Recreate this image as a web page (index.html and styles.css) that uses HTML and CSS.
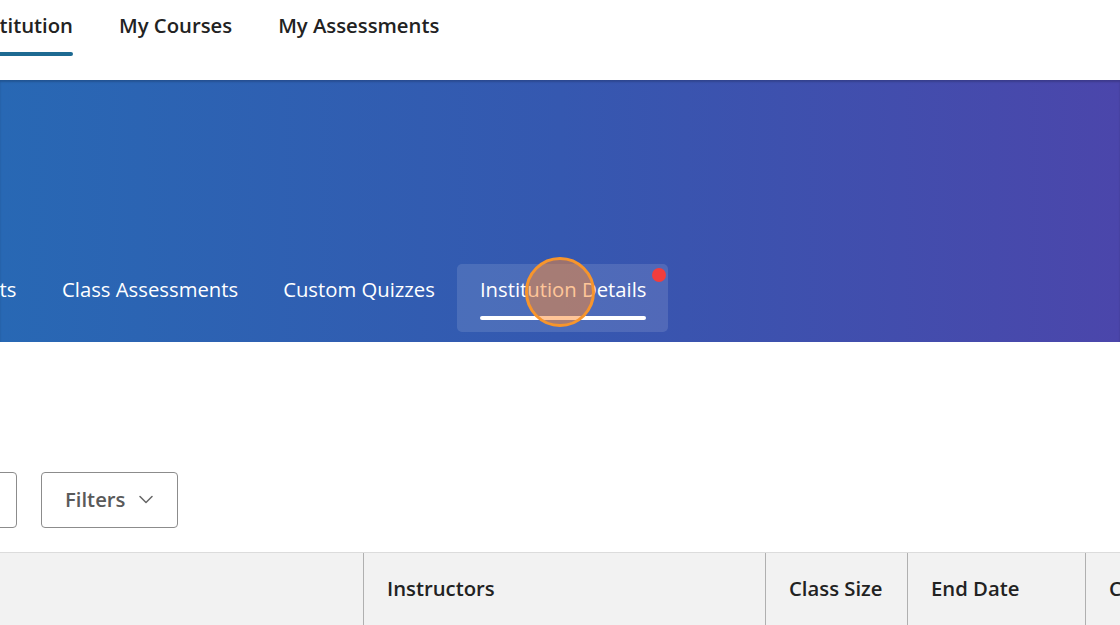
FILE: index.html
```html
<!DOCTYPE html>
<html>
<head>
<meta charset="utf-8">
<link rel="stylesheet" href="styles.css">
</head>
<body>
<header class="topnav">
  <div class="nav-item nav-first active"><span class="nav-label">Institution</span><span class="nav-bar"></span></div>
  <div class="nav-item"><span class="nav-label">My Courses</span></div>
  <div class="nav-item"><span class="nav-label">My Assessments</span></div>
</header>
<section class="banner">
  <nav class="tabs">
    <div class="tab tab-first"><span class="tab-label">Student Assessments</span></div>
    <div class="tab"><span class="tab-label">Class Assessments</span></div>
    <div class="tab"><span class="tab-label">Custom Quizzes</span></div>
    <div class="tab tab-active"><span class="tab-label">Institution Details</span><span class="tab-bar"></span><span class="dot"></span><span class="cursor"></span></div>
  </nav>
</section>
<section class="toolbar">
  <div class="search"></div>
  <button class="filters">Filters<svg class="chev" width="14" height="9" viewBox="0 0 14 9"><path d="M1 1.5 L7 7.5 L13 1.5" fill="none" stroke="#666" stroke-width="1.5" stroke-linecap="round" stroke-linejoin="round"/></svg></button>
</section>
<section class="table">
  <div class="th"></div>
  <div class="th">Instructors</div>
  <div class="th">Class Size</div>
  <div class="th">End Date</div>
  <div class="th">Course Code</div>
</section>
</body>
</html>
```
FILE: styles.css
```css
html, body {
  margin: 0;
  padding: 0;
}
body {
  width: 1120px;
  height: 625px;
  overflow: hidden;
  background: #fff;
  font-family: "Open Sans", "Noto Sans", sans-serif;
}
.topnav {
  height: 80px;
  display: flex;
  gap: 46px;
  box-sizing: border-box;
}
.nav-item {
  display: flex;
  flex-direction: column;
  padding-top: 11px;
  font-size: 20.3px;
  font-weight: 600;
  line-height: 28px;
  color: #222;
  white-space: nowrap;
}
.nav-first {
  width: 73px;
  overflow: hidden;
  align-items: flex-end;
}
.nav-bar {
  display: block;
  width: 73px;
  height: 4px;
  margin-top: 13px;
  background: #1d6a92;
  border-radius: 0 3px 3px 0;
}
.banner {
  height: 262px;
  background: linear-gradient(90deg, #2868b4 0%, #3558b0 50%, #4b46ab 100%);
  box-shadow: inset 0 2px 2px rgba(0, 0, 0, 0.18);
  display: flex;
  flex-direction: column;
  justify-content: flex-end;
  padding-bottom: 10px;
  box-sizing: border-box;
}
.tabs {
  display: flex;
  height: 68px;
}
.tab {
  position: relative;
  padding: 11px 22.5px 0;
  font-size: 20.3px;
  line-height: 28px;
  color: #fff;
  white-space: nowrap;
  display: flex;
  flex-direction: column;
  border-radius: 5px;
}
.tab-first {
  width: 39.5px;
  padding: 11px 23px 0 0;
  box-sizing: border-box;
  overflow: hidden;
  align-items: flex-end;
}
.tab-active {
  background: rgba(255, 255, 255, 0.12);
  padding-right: 22px;
}
.tab-bar {
  display: block;
  height: 4px;
  margin-top: 13px;
  background: #fff;
  border-radius: 2px;
}
.dot {
  position: absolute;
  top: 4px;
  right: 2px;
  width: 14px;
  height: 14px;
  border-radius: 50%;
  background: #f23d3d;
}
.cursor {
  position: absolute;
  left: 68px;
  top: -7px;
  width: 70px;
  height: 70px;
  box-sizing: border-box;
  border-radius: 50%;
  border: 3px solid #f7952c;
  background: rgba(255, 140, 50, 0.5);
}
.toolbar {
  display: flex;
  gap: 24px;
  margin-top: 130px;
  height: 56px;
}
.search {
  width: 37px;
  margin-left: -20px;
  height: 56px;
  box-sizing: border-box;
  border: 1px solid #8c8c8c;
  border-radius: 4px;
}
.filters {
  width: 137px;
  height: 56px;
  box-sizing: border-box;
  border: 1px solid #8c8c8c;
  border-radius: 4px;
  background: #fff;
  display: flex;
  align-items: center;
  gap: 14px;
  padding: 0 0 2px 23px;
  font-family: "Open Sans", "Noto Sans", sans-serif;
  font-size: 20.3px;
  font-weight: 600;
  color: #5a5a5a;
}
.chev {
  margin-top: 1px;
}
.table {
  margin-top: 24px;
  display: grid;
  grid-template-columns: 363px 402px 142px 178px 1fr;
  background: #f2f2f2;
  border-top: 1px solid #dcdcdc;
  height: 80px;
}
.th {
  padding: 21px 0 0 23px;
  font-size: 20.3px;
  font-weight: 600;
  line-height: 28px;
  color: #222;
  white-space: nowrap;
  overflow: hidden;
}
.th + .th {
  border-left: 1px solid #b0b0b0;
}
```
